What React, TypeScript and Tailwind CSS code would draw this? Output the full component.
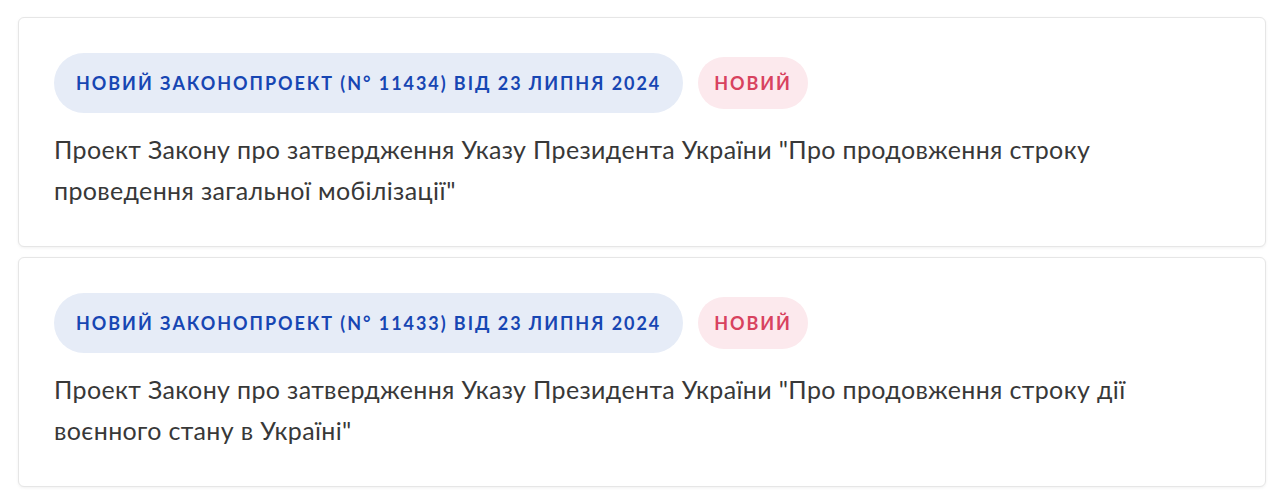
import React from 'react';

type Bill = {
  number: string;
  date: string;
  title: string;
};

const bills: Bill[] = [
  {
    number: '11434',
    date: '23 липня 2024',
    title: 'Проект Закону про затвердження Указу Президента України "Про продовження строку проведення загальної мобілізації"',
  },
  {
    number: '11433',
    date: '23 липня 2024',
    title: 'Проект Закону про затвердження Указу Президента України "Про продовження строку дії воєнного стану в Україні"',
  },
];

function BillCard({ bill }: { bill: Bill }) {
  return (
    <article className="rounded-md border border-[#e6e6e6] bg-white px-[35px] pt-[35px] pb-[35px] shadow-[0_1px_3px_rgba(0,0,0,0.06)]">
      <div className="flex items-center gap-[15px]">
        <span className="flex h-[60px] items-center rounded-full bg-[#e6ecf7] px-[22px] text-[18px] font-bold uppercase tracking-[0.108em] text-[#1746b3]">
          Новий законопроект (N° {bill.number}) від {bill.date}
        </span>
        <span className="flex h-[52px] items-center rounded-full bg-[#fce9ed] px-[16px] text-[18px] font-bold uppercase tracking-[0.108em] text-[#d8425f]">
          Новий
        </span>
      </div>
      <p className="mt-[16px] pr-[30px] text-[25px] leading-[41px] tracking-[0.014em] text-[#383838]">{bill.title}</p>
    </article>
  );
}

export default function App() {
  return (
    <main className="min-h-screen bg-white pl-[18px] pr-[14px] pt-[17px] font-['Lato','Noto_Sans',sans-serif]">
      <div className="flex flex-col gap-[10px]">
        {bills.map((b) => (
          <BillCard key={b.number} bill={b} />
        ))}
      </div>
    </main>
  );
}
